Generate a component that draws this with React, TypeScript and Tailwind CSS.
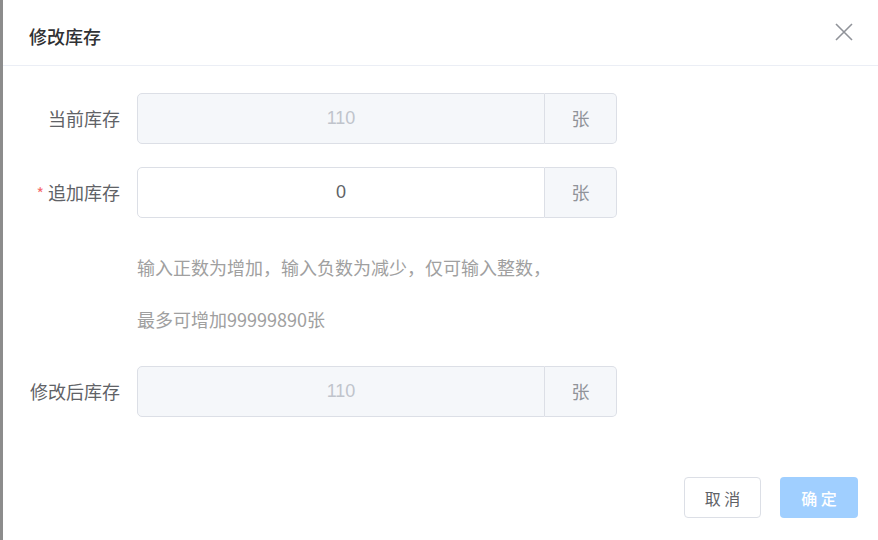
import React from "react";

const font = { fontFamily: '"Microsoft YaHei", "Noto Sans CJK SC", "Noto Sans", sans-serif' };

type RowProps = {
  label: string;
  value: string;
  required?: boolean;
  disabled?: boolean;
};

const StockRow: React.FC<RowProps> = ({ label, value, required, disabled }) => (
  <div className="flex items-center h-[51px]">
    <div className="w-[134px] pr-[17px] flex justify-end items-center text-[18px] text-[#606266]">
      {required && <span className="text-[#f56c6c] mr-[4px] text-[16px]">*</span>}
      <span>{label}</span>
    </div>
    <div className="flex w-[480px] h-[51px]">
      <div
        className={`flex-1 flex items-center justify-center border border-[#dcdfe6] rounded-l-[5px] text-[18px] ${
          disabled ? "bg-[#f5f7fa] text-[#c0c4cc]" : "bg-white text-[#606266]"
        }`}
        style={{ fontFamily: '"Liberation Sans", "Noto Sans CJK SC", sans-serif' }}
      >
        {value}
      </div>
      <div className="w-[72px] flex items-center justify-center border border-l-0 border-[#dcdfe6] rounded-r-[5px] bg-[#f5f7fa] text-[18px] text-[#909399]">
        张
      </div>
    </div>
  </div>
);

export default function App() {
  return (
    <div className="flex w-[878px] h-[540px] overflow-hidden bg-white" style={font}>
      {/* overlay edge */}
      <div className="w-[3px] h-full bg-[#8c8c8c]" />

      <div className="flex-1 flex flex-col bg-white">
        {/* Header */}
        <div className="h-[66px] border-b border-[#ebeef5] flex items-start justify-between pl-[26px] pr-[24px] pt-[24px]">
          <span className="text-[18px] leading-[24px] text-[#303133] font-medium">修改库存</span>
          <svg width="20" height="20" viewBox="0 0 20 20" className="mt-[-2px]">
            <path d="M2 2 L18 18 M18 2 L2 18" stroke="#909399" strokeWidth="1.6" fill="none" />
          </svg>
        </div>

        {/* Body */}
        <div className="flex flex-col pt-[27px]">
          <StockRow label="当前库存" value="110" disabled />
          <div className="mt-[23px]">
            <StockRow label="追加库存" value="0" required />
          </div>
          <div className="pl-[134px] mt-[36px] flex flex-col gap-[26px] text-[18px] leading-[26px] text-[#a0a0a0]">
            <span>输入正数为增加，输入负数为减少，仅可输入整数，</span>
            <span>最多可增加99999890张</span>
          </div>
          <div className="mt-[34px]">
            <StockRow label="修改后库存" value="110" disabled />
          </div>
        </div>

        {/* Footer */}
        <div className="flex justify-end gap-[19px] pr-[20px] mt-[60px]">
          <button className="w-[77px] h-[41px] rounded-[4px] border border-[#dcdfe6] bg-white text-[16px] text-[#606266]">
            取 消
          </button>
          <button className="w-[78px] h-[41px] rounded-[4px] bg-[#a0cfff] text-[16px] text-white font-medium">
            确 定
          </button>
        </div>
      </div>
    </div>
  );
}
